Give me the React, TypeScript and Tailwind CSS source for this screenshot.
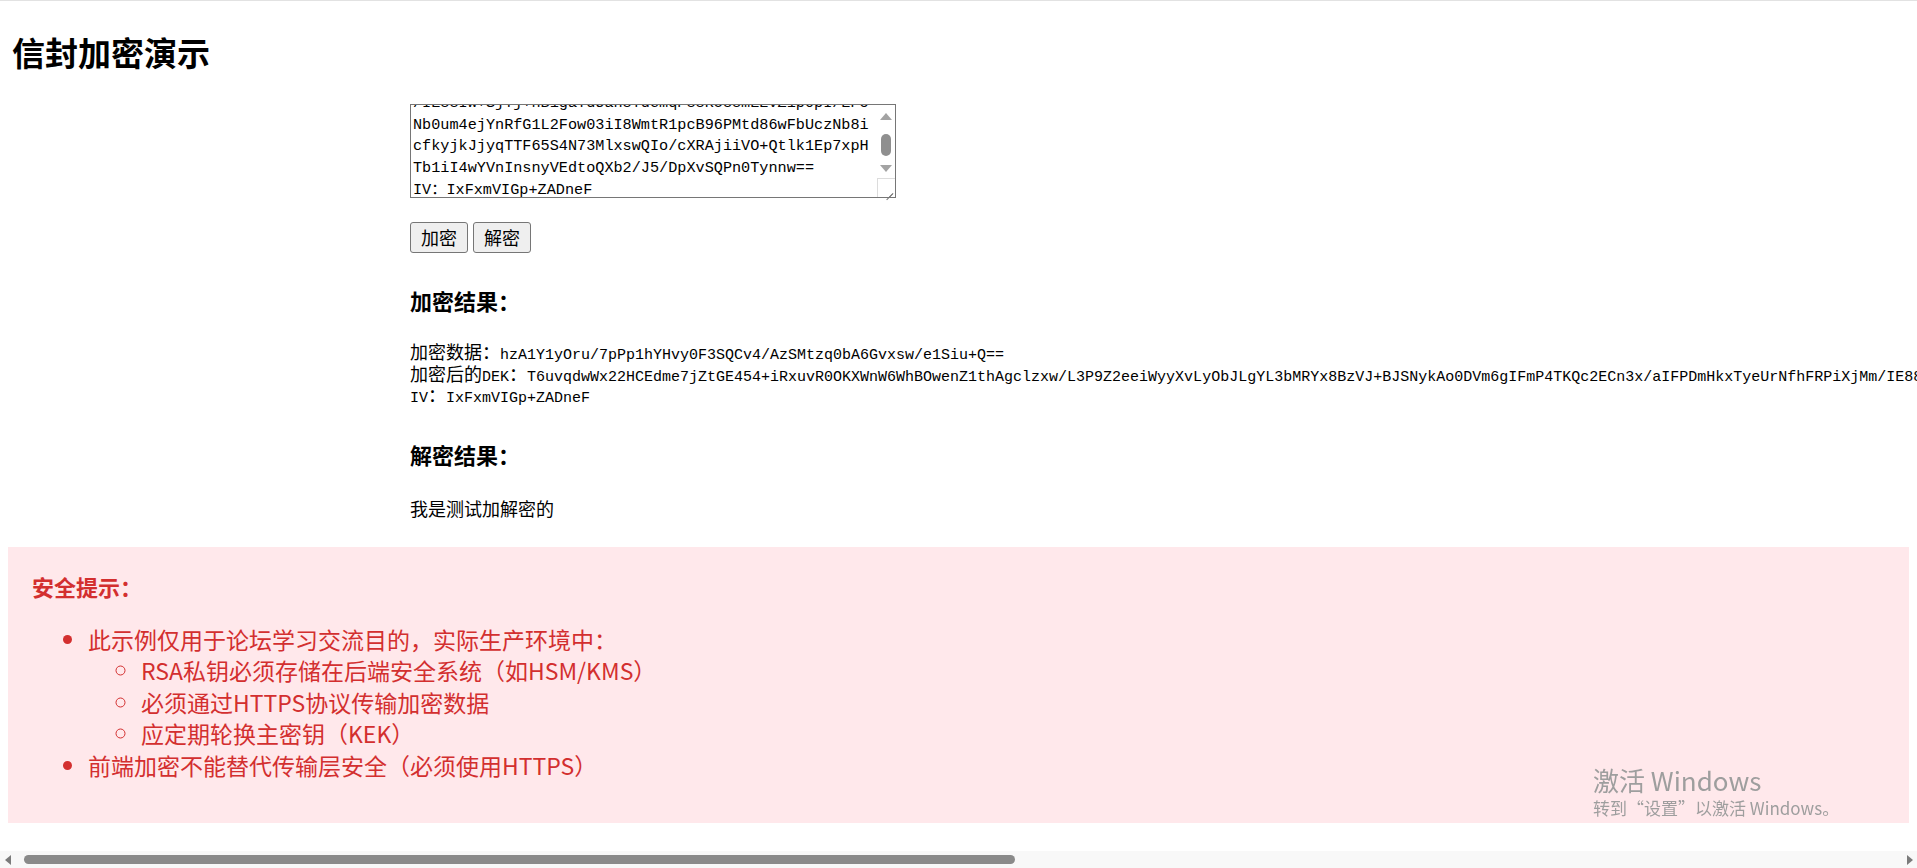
import { useEffect, useRef, useState } from 'react'

const DATA = 'hzA1Y1yOru/7pPp1hYHvy0F3SQCv4/AzSMtzq0bA6Gvxsw/e1Siu+Q=='
const DEK =
    'T6uvqdwWx22HCEdme7jZtGE454+iRxuvR0OKXWnW6WhBOwenZ1thAgclzxw/L3P9Z2eeiWyyXvLyObJLgYL3bMRYx8BzVJ+BJSNykAo0DVm6gIFmP4TKQc2ECn3x/aIFPDmHkxTyeUrNfhFRPiXjMm/IE8' +
    '8Iw+SjYj+nB1gaYdUah8YdemqP88R588mEEvZ1p0pI/EPo' +
    'Nb0um4ejYnRfG1L2Fow03iI8WmtR1pcB96PMtd86wFbUczNb8i' +
    'cfkyjkJjyqTTF65S4N73MlxswQIo/cXRAjiiVO+Qtlk1Ep7xpH' +
    'Tb1iI4wYVnInsnyVEdtoQXb2/J5/DpXvSQPn0Tynnw=='
const IV = 'IxFxmVIGp+ZADneF'

function chunk(s: string, n: number) {
    const out: string[] = []
    for (let i = 0; i < s.length; i += n) out.push(s.slice(i, i + n))
    return out
}

const INPUT = ['加密数据：', ...chunk(DATA, 50), '加密后的DEK：', ...chunk(DEK, 50), 'IV：' + IV].join('\n')

export default function App() {
    const [input, setInput] = useState(INPUT)
    const [showResult, setShowResult] = useState(true)
    const boxRef = useRef<HTMLTextAreaElement>(null)

    useEffect(() => {
        // textarea sits scrolled near the end in the screenshot
        const el = boxRef.current
        if (el) el.scrollTop = el.scrollHeight - el.clientHeight - 4
    }, [])

    return (
        <div className="min-h-[868px] border-t border-[#e2e2e2] bg-white text-black font-['Noto_Sans_CJK_SC','Noto_Sans',sans-serif]">
            <h1 className="ml-[12px] mt-[31px] text-[33px] font-bold leading-[40px]">信封加密演示</h1>

            <div className="mx-auto w-[1097px]">
                <div className="relative mt-[32px] w-[486px]">
                    <textarea
                        ref={boxRef}
                        value={input}
                        wrap="off"
                        onChange={(e) => setInput(e.target.value)}
                        className="block h-[94px] w-[486px] resize-none overflow-hidden whitespace-pre border border-[#767676] bg-white pl-[2px] pr-[20px] pt-[2px] pb-0 font-['Liberation_Mono','Noto_Sans_CJK_SC',monospace] text-[15.2px] leading-[21.7px] text-black outline-none"
                    />
                    {/* scrollbar + resize grip of the textarea */}
                    <div className="absolute right-[1px] top-[1px] bottom-[1px] flex w-[18px] flex-col items-center bg-white">
                        <div className="mt-[8px] h-0 w-0 border-x-[6px] border-b-[7px] border-x-transparent border-b-[#a3a3a3]" />
                        <div className="mt-[14px] h-[22px] w-[10px] rounded-full bg-[#8f8f8f]" />
                        <div className="mt-[9px] h-0 w-0 border-x-[6px] border-t-[7px] border-x-transparent border-t-[#a3a3a3]" />
                        <div className="relative mt-auto h-[19px] w-[18px] border-l border-t border-[#dcdcdc] bg-white">
                            <div className="absolute bottom-[3px] right-[2px] h-[1px] w-[9px] origin-right -rotate-45 bg-[#777]" />
                            <div className="absolute bottom-[3px] right-[2px] h-[1px] w-[5px] origin-right -rotate-45 bg-[#777]" />
                        </div>
                    </div>
                </div>

                <div className="mt-[24px] flex gap-[5px]">
                    <button
                        onClick={() => setShowResult(true)}
                        className="h-[31px] rounded-[3px] border border-[#767676] bg-[#efefef] px-[10px] text-[18px] leading-[29px]"
                    >
                        加密
                    </button>
                    <button
                        onClick={() => setShowResult(true)}
                        className="h-[31px] rounded-[3px] border border-[#767676] bg-[#efefef] px-[10px] text-[18px] leading-[29px]"
                    >
                        解密
                    </button>
                </div>

                {showResult && (
                    <>
                        <h3 className="mt-[32px] text-[22px] font-bold leading-[30px]">加密结果：</h3>
                        <pre className="mt-[29px] font-['Liberation_Mono','Noto_Sans_CJK_SC',monospace] text-[15px] text-black">
                            <span className="block h-[21.5px] leading-[21.5px]">
                                <span className="text-[18px]">加密数据：</span>{DATA}
                            </span>
                            <span className="block h-[21.5px] leading-[21.5px]">
                                <span className="text-[18px]">加密后的</span>DEK<span className="text-[18px]">：</span>{DEK}
                            </span>
                            <span className="block h-[21.5px] leading-[21.5px]">
                                IV<span className="text-[18px]">：</span>{IV}
                            </span>
                        </pre>

                        <h3 className="mt-[30px] text-[22px] font-bold leading-[30px]">解密结果：</h3>
                        <p className="mt-[26px] text-[18px] leading-[26px]">我是测试加解密的</p>
                    </>
                )}
            </div>

            <div className="mx-[8px] mt-[26px] bg-[#ffe8eb] px-[24px] pb-[42px] pt-[24px] text-[23px] text-[#d32f2f]">
                <h4 className="text-[22px] font-bold leading-[30px]">安全提示：</h4>
                <ul className="mt-[23px] list-disc pl-[56px] leading-[31.5px]">
                    <li>
                        此示例仅用于论坛学习交流目的，实际生产环境中：
                        <ul className="list-[circle] pl-[53px]">
                            <li>RSA私钥必须存储在后端安全系统（如HSM/KMS）</li>
                            <li>必须通过HTTPS协议传输加密数据</li>
                            <li>应定期轮换主密钥（KEK）</li>
                        </ul>
                    </li>
                    <li>前端加密不能替代传输层安全（必须使用HTTPS）</li>
                </ul>
            </div>

            {/* windows activation watermark */}
            <div className="pointer-events-none fixed left-[1593px] top-[763px] text-[#9e9e9e]">
                <div className="text-[26px] leading-[34px]">激活 Windows</div>
                <div className="text-[17px] leading-[22px]">转到“设置”以激活 Windows。</div>
            </div>

            {/* page horizontal scrollbar */}
            <div className="fixed bottom-0 left-0 right-0 flex h-[17px] items-center bg-[#f8f8f8]">
                <div className="ml-[5px] h-0 w-0 border-y-[5px] border-r-[6px] border-y-transparent border-r-[#7b7b7b]" />
                <div className="ml-[13px] h-[9px] w-[991px] rounded-full bg-[#8a8a8a]" />
                <div className="ml-auto mr-[4px] h-0 w-0 border-y-[5px] border-l-[6px] border-y-transparent border-l-[#7b7b7b]" />
            </div>
        </div>
    )
}
